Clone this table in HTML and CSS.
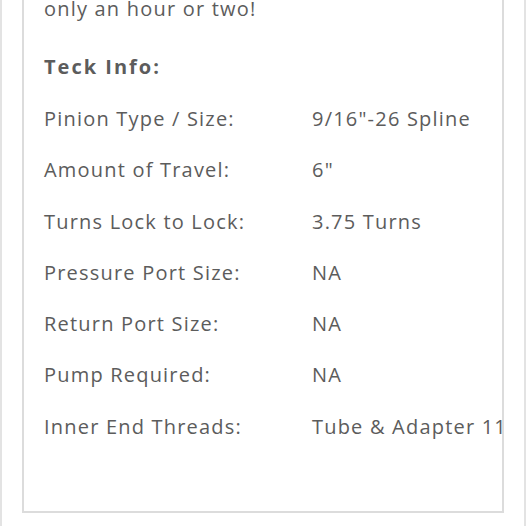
FILE: index.html
```html
<!DOCTYPE html>
<html>
<head>
<meta charset="utf-8">
<link rel="stylesheet" href="styles.css">
</head>
<body>
<div class="page">
  <div class="card">
    <p class="intro">only an hour or two!</p>
    <h3 class="heading">Teck Info:</h3>
    <dl class="specs">
      <dt class="label">Pinion Type / Size:</dt><dd class="value">9/16"-26 Spline</dd>
      <dt class="label">Amount of Travel:</dt><dd class="value">6"</dd>
      <dt class="label">Turns Lock to Lock:</dt><dd class="value">3.75 Turns</dd>
      <dt class="label">Pressure Port Size:</dt><dd class="value">NA</dd>
      <dt class="label">Return Port Size:</dt><dd class="value">NA</dd>
      <dt class="label">Pump Required:</dt><dd class="value">NA</dd>
      <dt class="label">Inner End Threads:</dt><dd class="value">Tube &amp; Adapter 11/16"-18</dd>
    </dl>
  </div>
</div>
</body>
</html>
```
FILE: styles.css
```css
html, body {
  margin: 0;
  padding: 0;
  background: #ffffff;
}
body {
  font-family: "Open Sans", "Noto Sans", sans-serif;
  color: #5c5c5c;
  font-size: 20px;
  line-height: 24px;
  letter-spacing: 1.2px;
}
.page {
  width: 482px;
  padding: 0 20px;
  border-left: 2px solid #e3e3e3;
  border-right: 2px solid #e3e3e3;
  min-height: 526px;
}
.card {
  border: 2px solid #dcdcdc;
  border-top: none;
  overflow: hidden;
  padding: 0 20px;
  height: 513px;
  box-sizing: border-box;
}
.intro {
  margin: -3px 0 0 0;
}
.heading {
  margin: 34px 0 0 0;
  font-size: 20px;
  font-weight: 700;
  letter-spacing: 2px;
  line-height: 24px;
}
.specs {
  display: grid;
  grid-template-columns: 268px max-content;
  margin: 14.4px 0 0 0;
  white-space: nowrap;
}
.specs dt,
.specs dd {
  margin: 0;
  padding: 13.65px 0;
}
```
